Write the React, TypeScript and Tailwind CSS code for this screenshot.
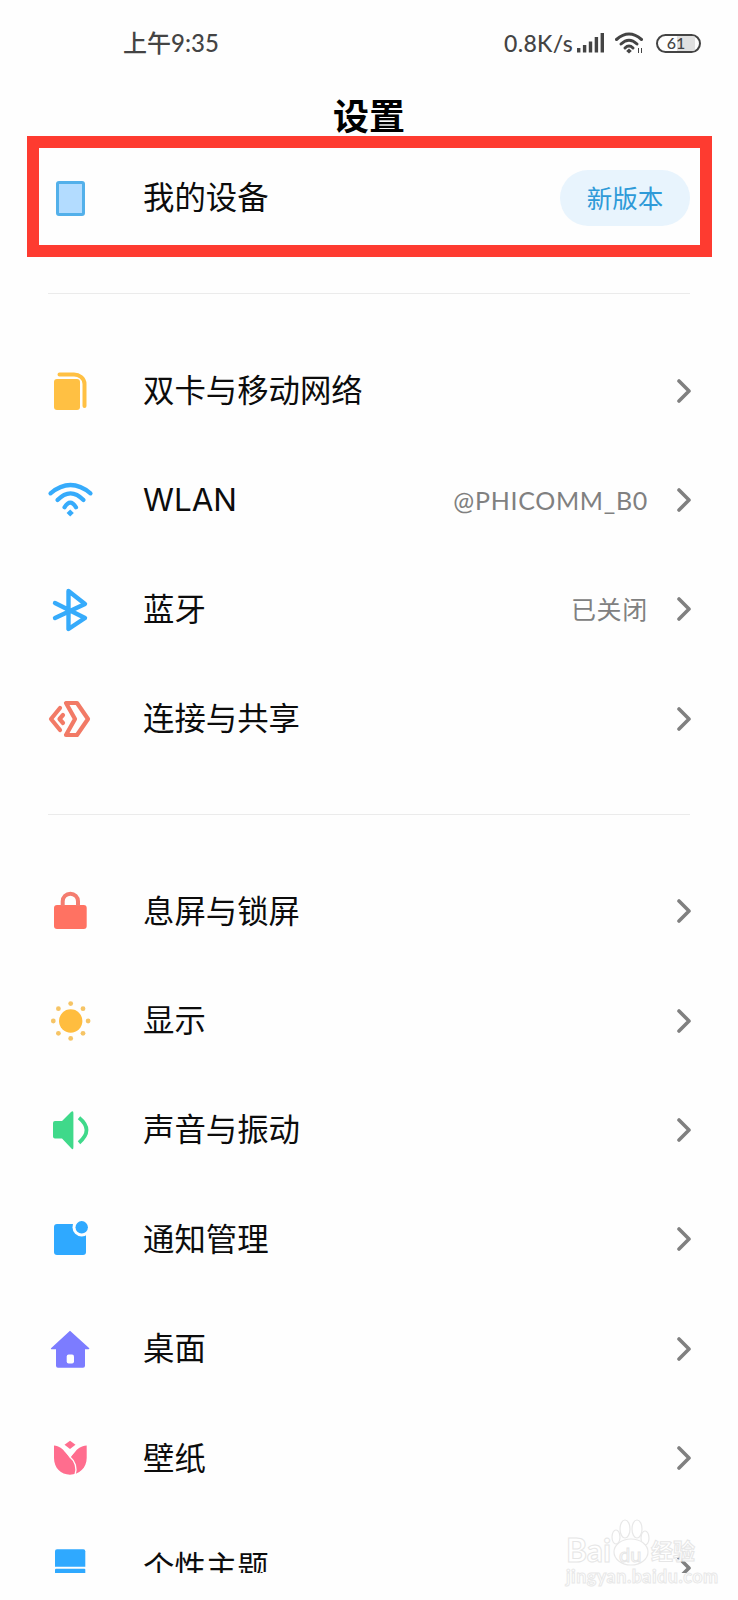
import React from "react";

const CJK = "font-['Inter','Noto_Sans_CJK_SC',sans-serif]";

function Chevron() {
  return (
    <svg width="14" height="24" viewBox="0 0 14 24" fill="none" className="shrink-0">
      <path d="M2 2L12 12L2 22" stroke="#808080" strokeWidth="3.6" strokeLinecap="round" strokeLinejoin="round" />
    </svg>
  );
}

function Box({ children }: { children: React.ReactNode }) {
  return (
    <svg width="44" height="44" viewBox="0 0 44 44" fill="none" className="shrink-0 overflow-visible">
      {children}
    </svg>
  );
}

const SimIcon = () => (
  <Box>
    <rect x="6" y="10" width="26" height="31" rx="3" fill="#FFC043" />
    <path d="M11.5 5.5H26C31 5.5 36.5 9 36.5 15V37" stroke="#FFC043" strokeWidth="4" strokeLinecap="round" />
  </Box>
);
const WifiIcon = () => (
  <Box>
    <g stroke="#36ABFB" strokeWidth="4.2" strokeLinecap="round">
      <path d="M2.5 15.3Q22.5 -1.3 42.5 15.3" />
      <path d="M9.5 22Q22.5 8.6 35.5 22" />
      <path d="M16.5 29.3Q22.3 20.1 28 29.3" />
    </g>
    <path d="M22.2 31.5L25.8 35L22.2 38.5L18.6 35Z" fill="#36ABFB" />
  </Box>
);
const BluetoothIcon = () => (
  <Box>
    <path d="M7 16L37 31L20.5 42V4L37 17L7 31" stroke="#36ABFB" strokeWidth="4.4" strokeLinecap="round" strokeLinejoin="round" />
  </Box>
);
const ConnectIcon = () => (
  <Box>
    <g stroke="#F27A66" strokeWidth="4.2" strokeLinejoin="round" strokeLinecap="round">
      <path d="M18 6H29L40 22L29 38H18L27 22Z" />
      <path d="M12 11L3 22L12 33" />
      <path d="M15 18L11.5 22L15 26" />
    </g>
  </Box>
);
const LockIcon = () => (
  <Box>
    <rect x="6" y="16" width="32.7" height="24" rx="3" fill="#FF7262" />
    <path d="M14.7 17V12.3A7.65 7.65 0 0 1 30 12.3V17" stroke="#F47C6F" strokeWidth="4" />
  </Box>
);
const SunIcon = () => (
  <Box>
    <circle cx="22.7" cy="22" r="11.7" fill="#FFBD3F" />
    <g fill="#F6C465">
      <circle cx="22.7" cy="4.6" r="2.4" />
      <circle cx="22.7" cy="39.4" r="2.4" />
      <circle cx="5.3" cy="22" r="2.4" />
      <circle cx="40.1" cy="22" r="2.4" />
      <circle cx="10.4" cy="9.7" r="2.4" />
      <circle cx="35" cy="9.7" r="2.4" />
      <circle cx="10.4" cy="34.3" r="2.4" />
      <circle cx="35" cy="34.3" r="2.4" />
    </g>
  </Box>
);
const SoundIcon = () => (
  <Box>
    <path d="M7 13H14L23 4Q25.4 2 25.4 5V39Q25.4 43 23 40L14 30.5H7Q5 30.5 5 28.5V15Q5 13 7 13Z" fill="#3FD98A" />
    <path d="M31 9.7Q46 22 31 34.7" stroke="#3FD98A" strokeWidth="3.8" />
  </Box>
);
const NotifyIcon = () => (
  <Box>
    <rect x="6" y="7" width="32" height="31" rx="3" fill="#2FA9FF" />
    <circle cx="33.7" cy="10.3" r="9.2" fill="#FEFEFE" />
    <circle cx="33.7" cy="10.3" r="6.2" fill="#2FA9FF" />
  </Box>
);
const HomeIcon = () => (
  <Box>
    <path d="M22 3.7L41.3 21.3Q41.5 22.3 40.5 22.3H37V38.7Q37 40.7 35 40.7H10Q8 40.7 8 38.7V22.3H3.5Q2.5 22.3 3 21.3Z" fill="#7C7CFF" />
    <rect x="18.7" y="27.5" width="7.3" height="9" rx="2" fill="#FEFEFE" />
  </Box>
);
const TulipIcon = () => (
  <Box>
    <path d="M22 4.7L27.5 8.7L22 13L16.5 8.7Z" fill="#FF6D8E" />
    <path d="M6 9.5C11 10 15 13 17 16L22 21L27 16C29 13 33 10 38.7 9.5V22C38.7 32 31 38.5 22 38.7C13 38.5 6 32 6 22Z" fill="#FF6D8E" />
    <path d="M22 21C27 25 29.5 32 27 39M17 14L22 21L27 14" stroke="#FEFEFE" strokeWidth="1.4" />
  </Box>
);
const ThemeIcon = () => (
  <Box>
    <path d="M9 3.3H35.3Q37.3 3.3 37.3 5.3V20.7H7V5.3Q7 3.3 9 3.3Z" fill="#2FA9FF" />
    <rect x="7" y="22.7" width="30.3" height="7" rx="1" fill="#2FA9FF" />
  </Box>
);

function Row({ icon, label, value }: { icon: React.ReactNode; label: string; value?: string }) {
  return (
    <div className="flex h-[109.4px] items-center pl-[48px] pr-[47px]">
      {icon}
      <span className="ml-[51px] pt-[2px] text-[31.4px] leading-none text-[#0c0c0c]">{label}</span>
      {value && <span className="ml-auto text-[25px] leading-none text-[#808080] font-['Lato','Noto_Sans_CJK_SC',sans-serif] tracking-[0.7px]">{value}</span>}
      <span className={value ? "ml-[29px] flex" : "ml-auto flex"}>
        <Chevron />
      </span>
    </div>
  );
}

export default function App() {
  return (
    <div className={`relative h-[1600px] w-[738px] overflow-hidden bg-[#fefefe] ${CJK}`}>
      <div className="h-[1573px] overflow-hidden">
        {/* status bar */}
        <div className="flex h-[86px] items-center justify-between pl-[123px] pr-[37px] text-[#444444]">
          <span className="font-['Lato','Noto_Sans_CJK_SC',sans-serif] text-[24px] font-medium leading-none">上午9:35</span>
          <div className="flex items-center">
            <span className="font-['Lato',sans-serif] text-[23px] font-medium leading-none tracking-[0.3px]">0.8K/s</span>
            <svg width="27" height="20" viewBox="0 0 27 20" className="ml-[4px]" fill="#444444">
              <rect x="0" y="15" width="3.4" height="4.5" />
              <rect x="5.9" y="12" width="3.4" height="7.5" />
              <rect x="11.8" y="8.5" width="3.4" height="11" />
              <rect x="17.7" y="4" width="3.4" height="15.5" />
              <rect x="23.6" y="0" width="3.4" height="19.5" />
            </svg>
            <svg width="30" height="22" viewBox="0 0 30 22" className="ml-[11px]" fill="none">
              <g stroke="#444444" strokeWidth="3" strokeLinecap="round">
                <path d="M1.5 7.5Q14 -3.5 26.5 7.5" />
                <path d="M6 12Q14 4.5 22 12" />
                <path d="M10 16Q14 12 18 16" />
              </g>
              <path d="M14 16.5L16.8 19L14 21.5L11.2 19Z" fill="#444444" />
              <path d="M23.5 16V21M26.5 16V21" stroke="#444444" strokeWidth="1" />
            </svg>
            <div className="relative ml-[11px] flex h-[19px] w-[45px] items-center justify-center overflow-hidden rounded-full border-2 border-[#444444]">
              <div className="absolute bottom-0 right-[4px] top-0 w-[18px] bg-[#e0e0e0]" />
              <span className="relative mr-[5px] font-['Lato',sans-serif] text-[16px] font-medium leading-none">61</span>
            </div>
          </div>
        </div>
        {/* title */}
        <div className="flex h-[49.5px] justify-center pt-[12px]">
          <span className="text-[36px] font-bold leading-[38px] text-black">设置</span>
        </div>
        {/* annotated device row */}
        <div className="mx-[27px] box-border flex h-[121.5px] w-[684.5px] items-center border-[12px] border-[#fe3b30] pl-[17px] pr-[10px] pt-[4px]">
          <div className="box-border h-[35px] w-[29px] shrink-0 rounded-[3px] border-[3px] border-[#53b0ea] bg-[#b3dcff]" />
          <span className="ml-[58px] pt-[1px] text-[31.4px] leading-none text-[#0c0c0c]">我的设备</span>
          <div className="ml-auto flex h-[56px] w-[130px] items-center justify-center rounded-full bg-[#e8f4fd]">
            <span className="pl-[1px] pt-[1px] text-[25.5px] leading-none text-[#2e9ad8]">新版本</span>
          </div>
        </div>
        <div className="mx-[48px] mt-[36px] h-px bg-[#ebebeb]" />
        <div className="mt-[42px]">
          <Row icon={<SimIcon />} label="双卡与移动网络" />
          <Row icon={<WifiIcon />} label="WLAN" value="@PHICOMM_B0" />
          <Row icon={<BluetoothIcon />} label="蓝牙" value="已关闭" />
          <Row icon={<ConnectIcon />} label="连接与共享" />
        </div>
        <div className="mx-[48px] mt-[40px] h-px bg-[#ebebeb]" />
        <div className="mt-[42px]">
          <Row icon={<LockIcon />} label="息屏与锁屏" />
          <Row icon={<SunIcon />} label="显示" />
          <Row icon={<SoundIcon />} label="声音与振动" />
          <Row icon={<NotifyIcon />} label="通知管理" />
          <Row icon={<HomeIcon />} label="桌面" />
          <Row icon={<TulipIcon />} label="壁纸" />
          <Row icon={<ThemeIcon />} label="个性主题" />
        </div>
      </div>
      {/* watermark */}
      <div className="absolute left-[564px] top-[1518px] h-[70px] w-[140px]">
        <svg width="140" height="50" viewBox="0 0 140 50" className="absolute left-0 top-0" fill="#ffffff" stroke="#e8e8e8" strokeWidth="1.2">
          <ellipse cx="52" cy="19" rx="4" ry="7" />
          <ellipse cx="61" cy="11" rx="5" ry="9" />
          <ellipse cx="73" cy="11" rx="5" ry="9" />
          <ellipse cx="81" cy="20" rx="4" ry="7" />
          <ellipse cx="67" cy="34" rx="17" ry="13" />
        </svg>
        <span className="absolute left-[2px] top-[16px] font-['Lato',sans-serif] text-[32px] font-bold leading-none text-white [-webkit-text-stroke:1px_#e6e6e6]">Bai</span>
        <span className="absolute left-[55px] top-[26px] font-['Lato',sans-serif] text-[20px] leading-none text-white [-webkit-text-stroke:1px_#e6e6e6]">du</span>
        <span className="absolute left-[87px] top-[22px] text-[22px] font-bold leading-none text-white [-webkit-text-stroke:1px_#e6e6e6]">经验</span>
        <span className="absolute left-[2px] top-[49px] font-['Lato',sans-serif] text-[18px] font-bold leading-none tracking-[0.5px] text-white [-webkit-text-stroke:1px_#e8e8e8]">jingyan.baidu.com</span>
      </div>
    </div>
  );
}
